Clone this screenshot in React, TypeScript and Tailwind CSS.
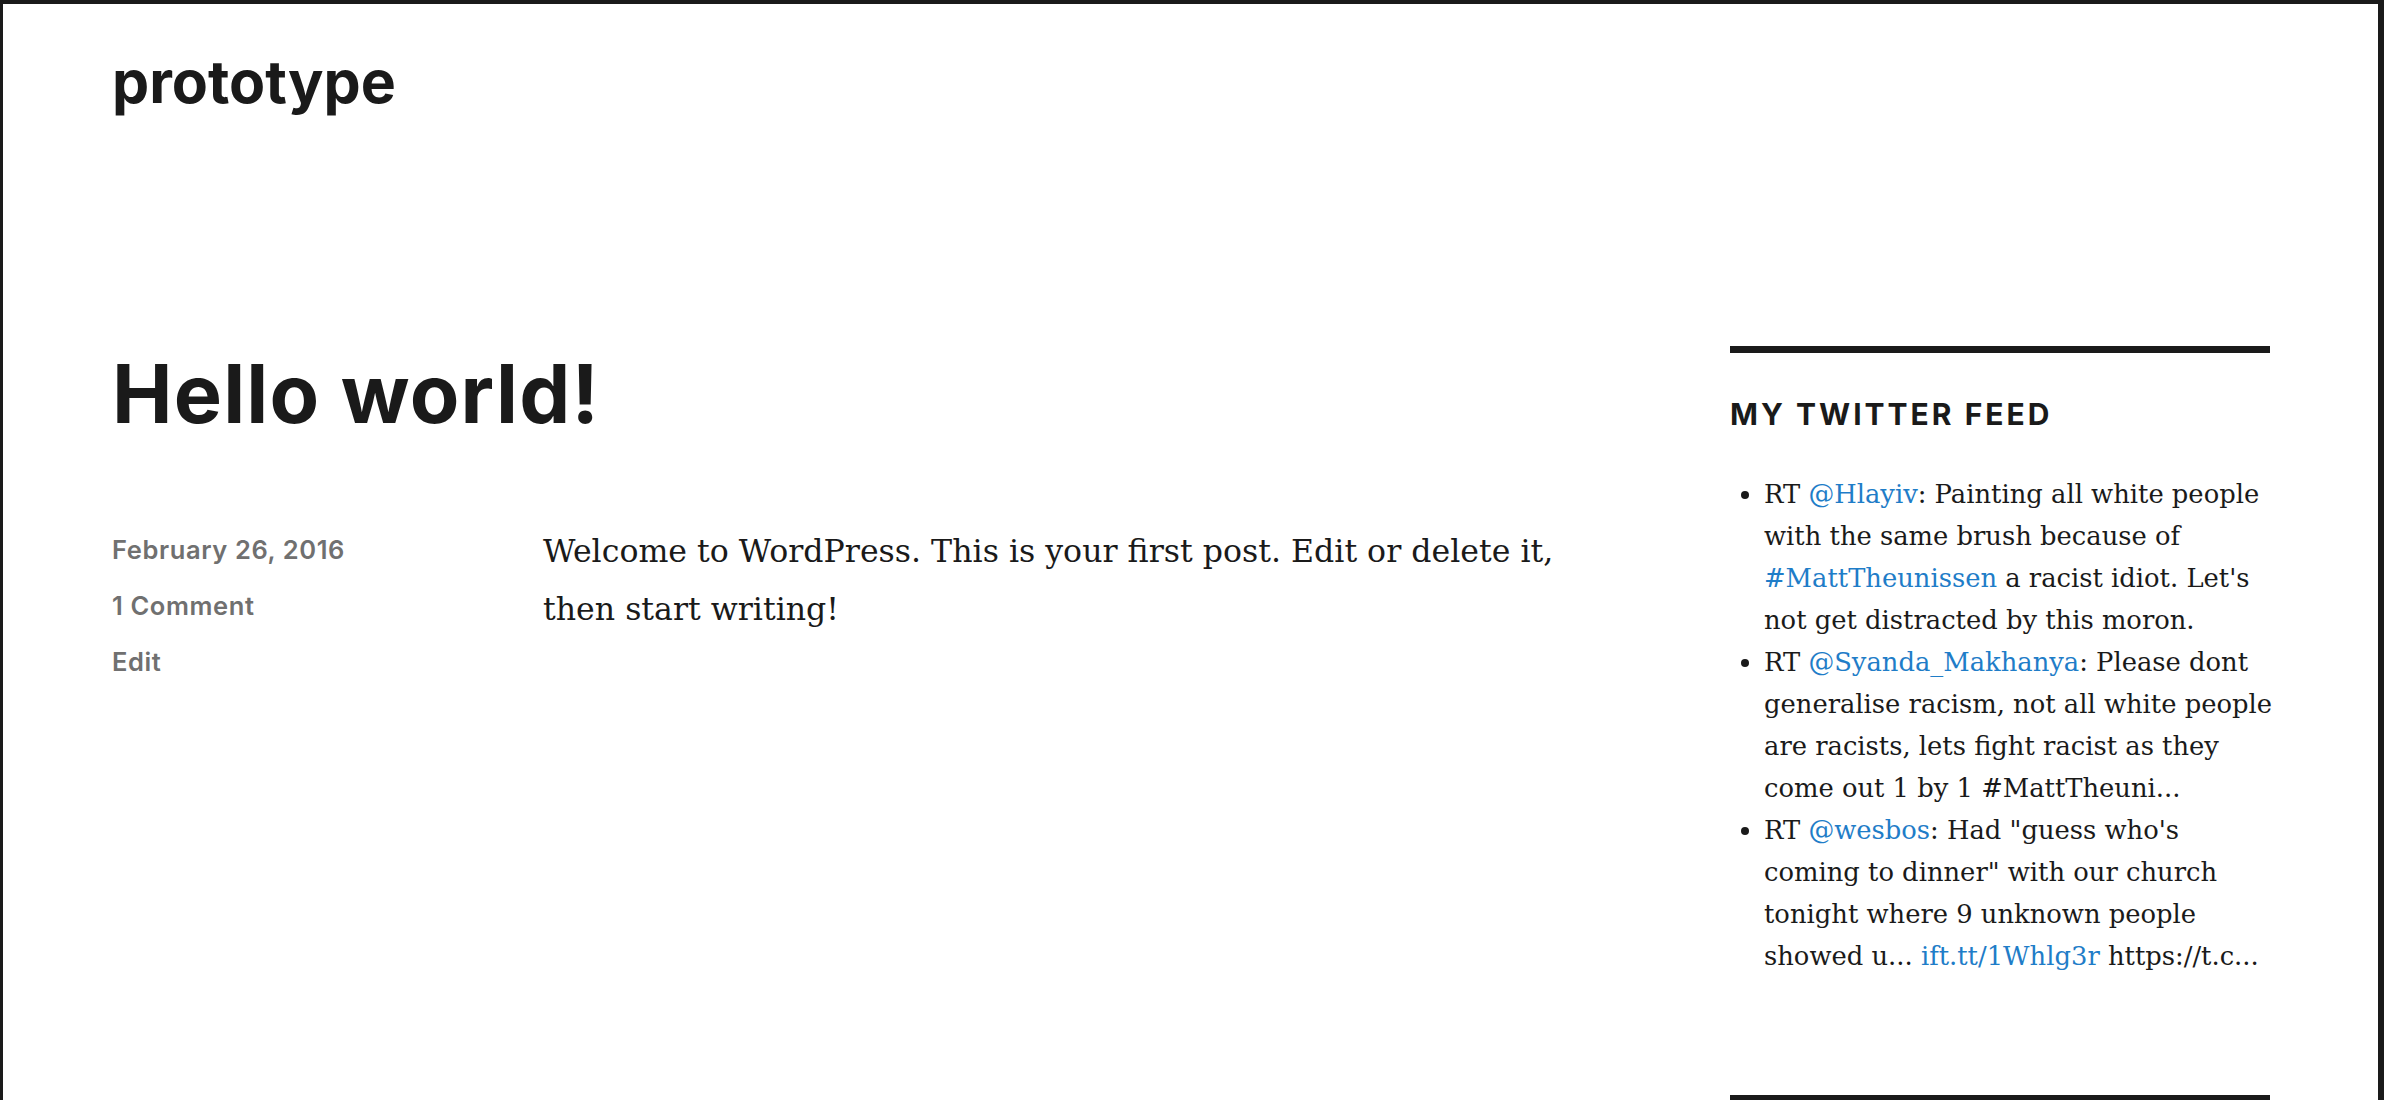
import React from 'react';

const tweets = [
  {
    user: '@Hlayiv',
    parts: [
      { t: ': Painting all white people with the same brush because of ' },
      { t: '#MattTheunissen', link: true },
      { t: " a racist idiot. Let's not get distracted by this moron." },
    ],
  },
  {
    user: '@Syanda_Makhanya',
    parts: [
      {
        t: ': Please dont generalise racism, not all white people are racists, lets fight racist as they come out 1 by 1 #MattTheuni...',
      },
    ],
  },
  {
    user: '@wesbos',
    parts: [
      { t: ': Had "guess who\'s coming to dinner" with our church tonight where 9 unknown people showed u... ' },
      { t: 'ift.tt/1Whlg3r', link: true },
      { t: ' https://t.c...' },
    ],
  },
];

export default function App() {
  return (
    <div className="h-[1100px] overflow-hidden bg-white border-t-4 border-l-[3px] border-r-[6px] border-[#1a1a1a] text-[#1a1a1a]">
      {/* Site header */}
      <header className="pl-[109px] pt-[42px]">
        <h1 className="font-['Inter',sans-serif] text-[59px] leading-[72px] font-bold">
          prototype
        </h1>
      </header>

      <main className="flex pl-[109px] mt-[228px]">
        {/* Post */}
        <article className="w-[1618px] shrink-0">
          <h2 className="mt-[8px] font-['Inter',sans-serif] text-[81px] leading-none font-bold tracking-[1.2px]">
            Hello world!
          </h2>

          <div className="flex mt-[87px]">
            <div className="w-[431px] shrink-0 flex flex-col font-['Inter',sans-serif] text-[25.5px] leading-[56px] font-semibold tracking-[0.6px] text-[#707070]">
              <span>February 26, 2016</span>
              <span>1 Comment</span>
              <span>Edit</span>
            </div>
            <div className="w-[1060px] font-['DejaVu_Serif',serif] text-[31.6px] leading-[58px]">
              <p>Welcome to WordPress. This is your first post. Edit or delete it, then start writing!</p>
            </div>
          </div>
        </article>

        {/* Sidebar */}
        <aside className="w-[540px] shrink-0">
          <section className="border-t-[7px] border-[#1a1a1a]">
            <h2 className="mt-[46px] font-['Inter',sans-serif] text-[30px] leading-none font-bold tracking-[3px] uppercase">
              My Twitter Feed
            </h2>
            <ul className="mt-[44px] -mr-[8px] list-disc pl-[34px] font-['DejaVu_Serif',serif] text-[25.8px] leading-[42px]">
              {tweets.map((tw) => (
                <li key={tw.user}>
                  RT <a className="text-[#1f7dc8]">{tw.user}</a>
                  {tw.parts.map((p, i) =>
                    p.link ? (
                      <a key={i} className="text-[#1f7dc8]">
                        {p.t}
                      </a>
                    ) : (
                      <span key={i}>{p.t}</span>
                    )
                  )}
                </li>
              ))}
            </ul>
          </section>
          <section className="mt-[118px] border-t-[7px] border-[#1a1a1a] h-[40px]" />
        </aside>
      </main>
    </div>
  );
}
